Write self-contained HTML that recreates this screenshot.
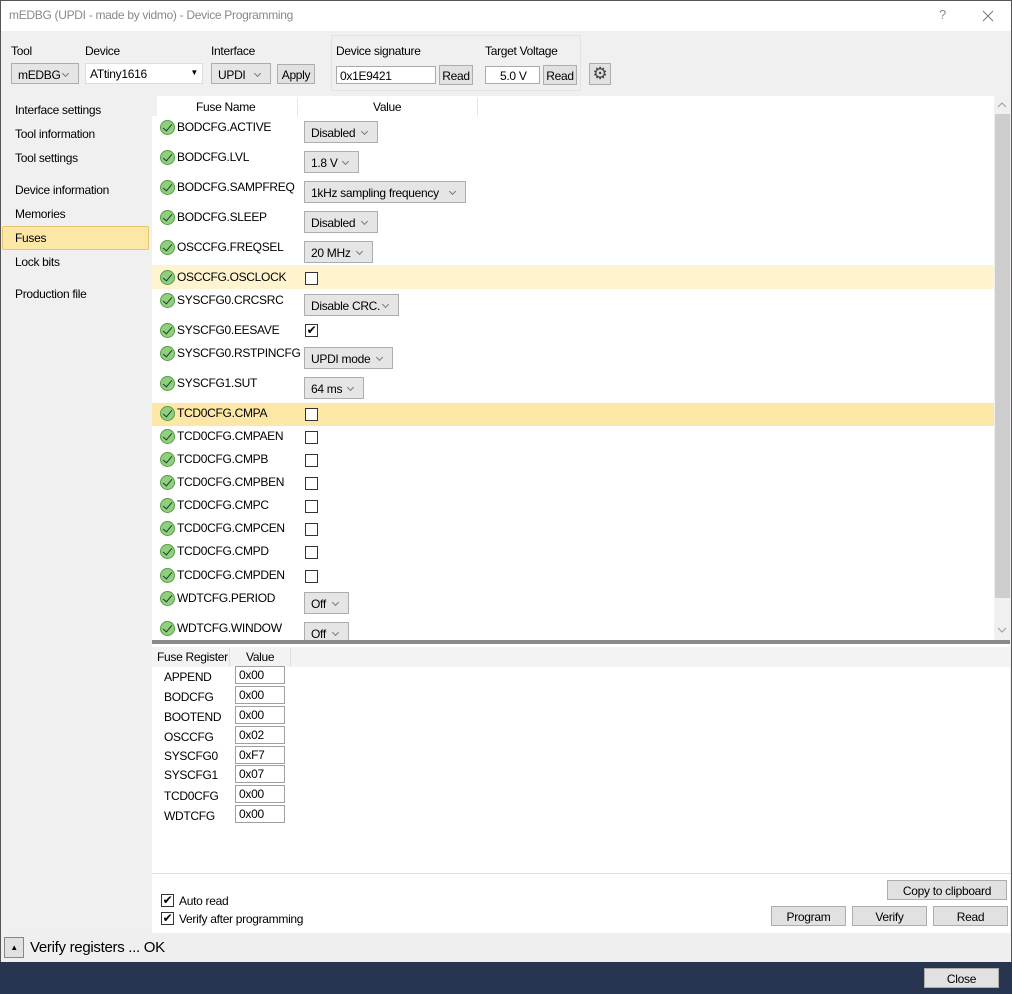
<!DOCTYPE html>
<html><head><meta charset="utf-8"><style>
*{box-sizing:border-box;margin:0;padding:0}
body{width:1012px;height:994px;position:relative;overflow:hidden;font-family:"Liberation Sans",sans-serif;font-size:12px;letter-spacing:-0.3px;color:#000;background:#f0f0f0}
.a{position:absolute;white-space:nowrap}
.dd{position:absolute;height:22px;background:#e5e5e5;border:1px solid #adadad;padding:4px 0 0 6px;font-size:12px}
.dd::after{content:"";position:absolute;right:10px;top:7px;width:4px;height:4px;border:solid #777;border-width:0 1px 1px 0;transform:rotate(45deg)}
.cb{position:absolute;width:13px;height:13px;border:1px solid #333;background:#fff;left:305px}
.ok{position:absolute;left:160px;width:15px;height:15px;border-radius:50%;background:#8fd17a;border:1px solid #5a9a4a}
.ok::after{content:"";position:absolute;left:4px;top:1px;width:4px;height:8px;border:solid #234;border-width:0 1.5px 1.5px 0;transform:rotate(40deg)}
.fn{position:absolute;left:177px}
.btn{position:absolute;background:#e1e1e1;border:1px solid #adadad;text-align:center;font-size:12px;padding-top:3px}
.tb{position:absolute;left:235px;width:50px;height:18px;border:1px solid #a0a0a0;background:#fff;padding:1px 0 0 3px}
.rn{position:absolute;left:164px}
</style></head><body>
<div class="a" style="left:0;top:0;width:1012px;height:994px;border:1px solid #555;border-bottom:none"></div>
<div class="a" style="left:1px;top:1px;width:1010px;height:30px;background:#fff"></div>
<div class="a" style="left:9px;top:8px;color:#888;font-size:12px">mEDBG (UPDI - made by vidmo) - Device Programming</div>
<div class="a" style="left:939px;top:7px;color:#888;font-size:13px">?</div>
<svg class="a" style="left:982px;top:10px" width="12" height="12"><path d="M1 1L11 11M11 1L1 11" stroke="#777" stroke-width="1"/></svg>
<!-- toolbar -->
<div class="a" style="left:11px;top:44px">Tool</div>
<div class="a" style="left:85px;top:44px">Device</div>
<div class="a" style="left:211px;top:44px">Interface</div>
<div class="a" style="left:336px;top:44px">Device signature</div>
<div class="a" style="left:485px;top:44px">Target Voltage</div>
<div class="a" style="left:331px;top:35px;width:250px;height:56px;border:1px solid #e3e3e3"></div>
<div class="dd" style="left:11px;top:63px;width:68px;height:21px">mEDBG</div>
<div class="a" style="left:85px;top:63px;width:118px;height:21px;background:#fff;border:1px solid #ddd;padding:3px 0 0 4px">ATtiny1616<span style="position:absolute;right:4px;top:4px;font-size:8px">▼</span></div>
<div class="dd" style="left:211px;top:63px;width:60px;height:21px">UPDI</div>
<div class="btn" style="left:277px;top:64px;width:38px;height:20px">Apply</div>
<div class="a" style="left:336px;top:66px;width:100px;height:18px;background:#fff;border:1px solid #aaa;padding:2px 0 0 3px">0x1E9421</div>
<div class="btn" style="left:439px;top:65px;width:34px;height:20px">Read</div>
<div class="a" style="left:485px;top:66px;width:55px;height:18px;background:#fff;border:1px solid #aaa;padding:2px 0 0 14px">5.0 V</div>
<div class="btn" style="left:543px;top:65px;width:34px;height:20px">Read</div>
<div class="btn" style="left:589px;top:63px;width:22px;height:22px;padding:0;font-size:17px;line-height:20px;color:#444">⚙</div>
<!-- nav -->
<div class="a" style="left:15px;top:103px">Interface settings</div>
<div class="a" style="left:15px;top:127px">Tool information</div>
<div class="a" style="left:15px;top:151px">Tool settings</div>
<div class="a" style="left:15px;top:183px">Device information</div>
<div class="a" style="left:15px;top:207px">Memories</div>
<div class="a" style="left:2px;top:226px;width:147px;height:24px;background:#fde7a6;border:1px solid #e6c770;border-radius:2px"></div>
<div class="a" style="left:15px;top:231px">Fuses</div>
<div class="a" style="left:15px;top:255px">Lock bits</div>
<div class="a" style="left:15px;top:287px">Production file</div>
<!-- upper table -->
<div class="a" style="left:152px;top:96px;width:858px;height:545px;background:#fff"></div>
<div class="a" style="left:152px;top:96px;width:5px;height:20px;background:#f0f0f0"></div>
<div class="a" style="left:196px;top:100px">Fuse Name</div>
<div class="a" style="left:373px;top:100px">Value</div>
<div class="a" style="left:297px;top:98px;width:1px;height:18px;background:#e5e5e5"></div>
<div class="a" style="left:477px;top:98px;width:1px;height:18px;background:#e5e5e5"></div>
<div class="a" style="left:152px;top:265px;width:842px;height:24px;background:#fff4cf"></div>
<div class="a" style="left:152px;top:403px;width:842px;height:23px;background:#fde7a6"></div>
<div class="a" style="left:994px;top:96px;width:16px;height:545px;background:#f0f0f0"></div>
<div class="a" style="left:995px;top:114px;width:15px;height:484px;background:#cdcdcd"></div>
<svg class="a" style="left:997px;top:101px" width="10" height="8"><path d="M1 6L5 2L9 6" stroke="#999" fill="none"/></svg>
<svg class="a" style="left:997px;top:626px" width="10" height="8"><path d="M1 2L5 6L9 2" stroke="#999" fill="none"/></svg>

<div class="ok" style="top:120px"></div><div class="fn" style="top:120px">BODCFG.ACTIVE</div><div class="dd" style="left:304px;top:121px;width:74px">Disabled</div>
<div class="ok" style="top:150px"></div><div class="fn" style="top:150px">BODCFG.LVL</div><div class="dd" style="left:304px;top:151px;width:55px">1.8 V</div>
<div class="ok" style="top:180px"></div><div class="fn" style="top:180px">BODCFG.SAMPFREQ</div><div class="dd" style="left:304px;top:181px;width:162px">1kHz sampling frequency</div>
<div class="ok" style="top:210px"></div><div class="fn" style="top:210px">BODCFG.SLEEP</div><div class="dd" style="left:304px;top:211px;width:74px">Disabled</div>
<div class="ok" style="top:240px"></div><div class="fn" style="top:240px">OSCCFG.FREQSEL</div><div class="dd" style="left:304px;top:241px;width:69px">20 MHz</div>
<div class="ok" style="top:270px"></div><div class="fn" style="top:270px">OSCCFG.OSCLOCK</div><div class="cb" style="top:272px"></div>
<div class="ok" style="top:293px"></div><div class="fn" style="top:293px">SYSCFG0.CRCSRC</div><div class="dd" style="left:304px;top:294px;width:95px">Disable CRC.</div>
<div class="ok" style="top:323px"></div><div class="fn" style="top:323px">SYSCFG0.EESAVE</div><div class="cb" style="top:324px;font-size:12px;line-height:11px;text-align:center">✔</div>
<div class="ok" style="top:346px"></div><div class="fn" style="top:346px">SYSCFG0.RSTPINCFG</div><div class="dd" style="left:304px;top:347px;width:89px">UPDI mode</div>
<div class="ok" style="top:376px"></div><div class="fn" style="top:376px">SYSCFG1.SUT</div><div class="dd" style="left:304px;top:377px;width:60px">64 ms</div>
<div class="ok" style="top:406px"></div><div class="fn" style="top:406px">TCD0CFG.CMPA</div><div class="cb" style="top:408px"></div>
<div class="ok" style="top:429px"></div><div class="fn" style="top:429px">TCD0CFG.CMPAEN</div><div class="cb" style="top:431px"></div>
<div class="ok" style="top:452px"></div><div class="fn" style="top:452px">TCD0CFG.CMPB</div><div class="cb" style="top:454px"></div>
<div class="ok" style="top:475px"></div><div class="fn" style="top:475px">TCD0CFG.CMPBEN</div><div class="cb" style="top:477px"></div>
<div class="ok" style="top:498px"></div><div class="fn" style="top:498px">TCD0CFG.CMPC</div><div class="cb" style="top:500px"></div>
<div class="ok" style="top:521px"></div><div class="fn" style="top:521px">TCD0CFG.CMPCEN</div><div class="cb" style="top:523px"></div>
<div class="ok" style="top:544px"></div><div class="fn" style="top:544px">TCD0CFG.CMPD</div><div class="cb" style="top:546px"></div>
<div class="ok" style="top:568px"></div><div class="fn" style="top:568px">TCD0CFG.CMPDEN</div><div class="cb" style="top:570px"></div>
<div class="ok" style="top:591px"></div><div class="fn" style="top:591px">WDTCFG.PERIOD</div><div class="dd" style="left:304px;top:592px;width:45px">Off</div>
<div class="ok" style="top:621px"></div><div class="fn" style="top:621px">WDTCFG.WINDOW</div><div class="dd" style="left:304px;top:622px;width:45px;height:19px">Off</div>
<div class="a" style="left:152px;top:640px;width:858px;height:4px;background:#8a8a8a"></div>
<!-- lower -->
<div class="a" style="left:152px;top:644px;width:858px;height:289px;background:#fff"></div>
<div class="a" style="left:152px;top:647px;width:858px;height:20px;background:#f3f3f3"></div>
<div class="a" style="left:157px;top:650px">Fuse Register</div>
<div class="a" style="left:246px;top:650px">Value</div>
<div class="a" style="left:229px;top:648px;width:1px;height:18px;background:#ddd"></div>
<div class="a" style="left:290px;top:648px;width:1px;height:18px;background:#ddd"></div>
<div class="rn" style="top:670px">APPEND</div><div class="tb" style="top:666px">0x00</div>
<div class="rn" style="top:690px">BODCFG</div><div class="tb" style="top:686px">0x00</div>
<div class="rn" style="top:710px">BOOTEND</div><div class="tb" style="top:706px">0x00</div>
<div class="rn" style="top:730px">OSCCFG</div><div class="tb" style="top:726px">0x02</div>
<div class="rn" style="top:749px">SYSCFG0</div><div class="tb" style="top:746px">0xF7</div>
<div class="rn" style="top:768px">SYSCFG1</div><div class="tb" style="top:765px">0x07</div>
<div class="rn" style="top:789px">TCD0CFG</div><div class="tb" style="top:785px">0x00</div>
<div class="rn" style="top:809px">WDTCFG</div><div class="tb" style="top:805px">0x00</div>
<div class="a" style="left:152px;top:873px;width:858px;height:1px;background:#d5dfe5"></div>
<div class="cb" style="left:161px;top:894px;font-size:12px;line-height:11px;text-align:center">✔</div>
<div class="a" style="left:179px;top:894px">Auto read</div>
<div class="cb" style="left:161px;top:912px;font-size:12px;line-height:11px;text-align:center">✔</div>
<div class="a" style="left:179px;top:912px">Verify after programming</div>
<div class="btn" style="left:887px;top:880px;width:120px;height:20px">Copy to clipboard</div>
<div class="btn" style="left:771px;top:906px;width:75px;height:20px">Program</div>
<div class="btn" style="left:852px;top:906px;width:75px;height:20px">Verify</div>
<div class="btn" style="left:933px;top:906px;width:75px;height:20px">Read</div>
<!-- status -->
<div class="a" style="left:1px;top:933px;width:1010px;height:29px;background:#efefef"></div>
<div class="a" style="left:4px;top:937px;width:20px;height:21px;border:1px solid #888;background:#e1e1e1;text-align:center;font-size:8px;line-height:19px">▲</div>
<div class="a" style="left:30px;top:939px;font-size:15px">Verify registers ... OK</div>
<div class="a" style="left:0;top:962px;width:1012px;height:32px;background:#283550"></div>
<div class="btn" style="left:924px;top:968px;width:75px;height:20px">Close</div>
</body></html>
